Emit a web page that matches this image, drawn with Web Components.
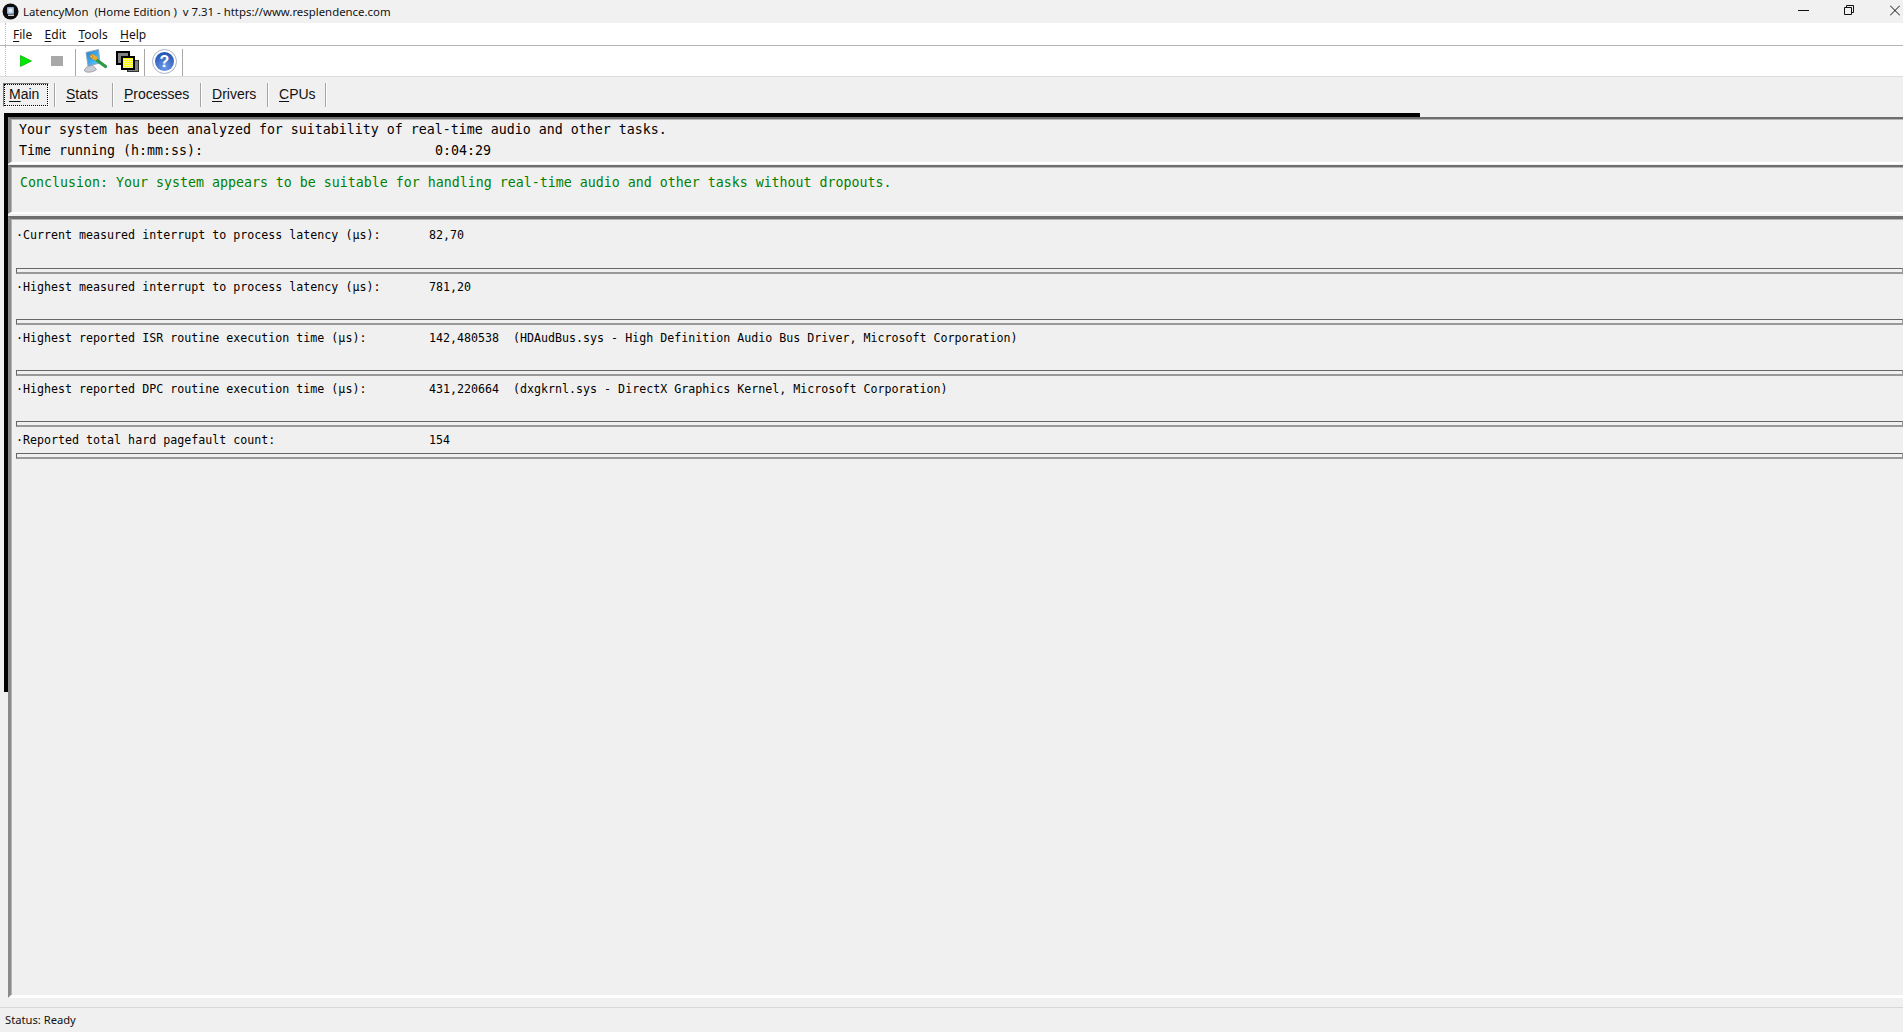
<!DOCTYPE html>
<html>
<head>
<meta charset="utf-8">
<title>LatencyMon</title>
<style>
  html, body { margin: 0; height: 1032px; overflow: hidden; background: #f0f0f0; }
  body { display: flex; flex-direction: column; font-family: "Noto Sans", sans-serif; color: #000; }
</style>
</head>
<body>
<title-bar></title-bar>
<menu-bar></menu-bar>
<tool-bar></tool-bar>
<tab-strip></tab-strip>
<main-view>
  <info-panel style="height:47px">
    <text-line>Your system has been analyzed for suitability of real-time audio and other tasks.</text-line>
    <text-line value="0:04:29">Time running (h:mm:ss):</text-line>
  </info-panel>
  <info-panel style="height:49px;margin-top:1px;--pad:5px;--left:9px;--ink:#008000">
    <text-line>Conclusion: Your system appears to be suitable for handling real-time audio and other tasks without dropouts.</text-line>
  </info-panel>
  <metric-list>
    <metric-row style="--h:46px" label="Current measured interrupt to process latency (µs):" value="82,70"></metric-row>
    <metric-row label="Highest measured interrupt to process latency (µs):" value="781,20"></metric-row>
    <metric-row label="Highest reported ISR routine execution time (µs):" value="142,480538" detail="(HDAudBus.sys - High Definition Audio Bus Driver, Microsoft Corporation)"></metric-row>
    <metric-row label="Highest reported DPC routine execution time (µs):" value="431,220664" detail="(dxgkrnl.sys - DirectX Graphics Kernel, Microsoft Corporation)"></metric-row>
    <metric-row style="--h:26px" label="Reported total hard pagefault count:" value="154"></metric-row>
  </metric-list>
</main-view>
<status-bar>Status: Ready</status-bar>

<script>
function defineSimple(name, html) {
  customElements.define(name, class extends HTMLElement {
    constructor() {
      super();
      this.attachShadow({mode: 'open'}).innerHTML = html;
    }
  });
}

defineSimple('title-bar', `
<style>
  :host { display: flex; align-items: center; height: 23px; flex: none; background: #f1f1f1; font: 11.4px "Noto Sans", sans-serif; color: #111; }
  svg { display: block; flex: none; }
  .logo { margin: 0 4px 0 2px; }
  .text { flex: 1; white-space: pre; }
</style>
<svg class="logo" width="17" height="17" viewBox="0 0 17 17">
  <circle cx="8.5" cy="8.5" r="8" fill="#0c0c0c"/>
  <rect x="5" y="4" width="7" height="7" rx="1" fill="#8fb0d8"/>
  <rect x="6.5" y="5.5" width="4" height="4" fill="#e8eef6"/>
  <rect x="6" y="11.5" width="6" height="1.5" fill="#d0d0d0"/>
</svg>
<span class="text">LatencyMon  (Home Edition )  v 7.31 - https://www.resplendence.com</span>
<svg style="margin-right:35px" width="11" height="23" viewBox="0 0 11 23"><path d="M0 10.5H11" stroke="#111" fill="none"/></svg>
<svg style="margin-right:36px" width="10" height="23" viewBox="0 0 10 23"><path d="M0.5 7.5H7.5V14.5H0.5ZM2.5 7V5.5H9.5V12.5H8" stroke="#111" fill="none"/></svg>
<svg style="margin-right:3px" width="10" height="23" viewBox="0 0 10 23"><path d="M0 5.5L10 15.5M10 5.5L0 15.5" stroke="#111" fill="none"/></svg>`);

const GRIP = `<span style="flex:none;align-self:stretch;width:0;margin-left:5px;border-left:1px dotted #bdbdbd"></span>`;

class MenuBar extends HTMLElement {
  constructor() {
    super();
    const root = this.attachShadow({mode: 'open'});
    const items = [['F', 'ile'], ['E', 'dit'], ['T', 'ools'], ['H', 'elp']];
    root.innerHTML = `
<style>
  :host { display: flex; flex: none; box-sizing: border-box; height: 23px; background: #fff; border-bottom: 1px solid #b4b4b4; font: 12px "Noto Sans", sans-serif; color: #111; align-items: center; }
  .items { display: flex; gap: 12.4px; margin-left: 7px; }
  u { text-decoration-thickness: 1px; text-underline-offset: 2px; }
</style>
${GRIP}<div class="items">${items.map(i => `<span><u>${i[0]}</u>${i[1]}</span>`).join('')}</div>`;
  }
}
customElements.define('menu-bar', MenuBar);

defineSimple('tool-bar', `
<style>
  :host { display: flex; flex: none; box-sizing: border-box; height: 31px; background: #fff; border-bottom: 1px solid #dcdcdc; align-items: center; }
  svg { display: block; flex: none; }
  .sep { width: 1px; align-self: stretch; margin: 3px 0 0; background: #a8a8a8; flex: none; }
</style>
${GRIP}
<svg style="margin-left:14px" width="12" height="12" viewBox="0 0 12 12"><path d="M0.5 0.5L11.5 6L0.5 11.5Z" fill="#00e800" stroke="#00b000" stroke-width="0.7"/></svg>
<svg style="margin-left:19px" width="12" height="10" viewBox="0 0 12 10"><rect width="12" height="10" fill="#a8a8a8"/></svg>
<span class="sep" style="margin-left:12px"></span>
<svg style="margin-left:7px" width="24" height="24" viewBox="0 0 24 24">
  <defs><linearGradient id="scr" x1="0" y1="0" x2="1" y2="1"><stop offset="0" stop-color="#1b7fd8"/><stop offset="1" stop-color="#62d0f6"/></linearGradient></defs>
  <path d="M3 3.5L15.5 0.5L17 14L5 17Z" fill="url(#scr)" stroke="#8fa2b8" stroke-width="0.9"/>
  <path d="M1.5 22C1.5 18.5 5.5 16.5 10 16.5L13.5 20.5C10 23.5 3.5 24 1.5 22Z" fill="#c9ccd4" stroke="#868a94" stroke-width="0.7"/>
  <path d="M13 10.5L22.5 17.5" stroke="#2f9a45" stroke-width="3.4" stroke-linecap="round"/>
  <path d="M8 6.5L14 10" stroke="#f0a828" stroke-width="4"/>
  <path d="M6.5 5.5L9.5 7L8 10Z" fill="#f6dc90" stroke="#7a5a20" stroke-width="0.5"/>
</svg>
<svg style="margin-left:9px" width="23" height="21" viewBox="0 0 23 21" shape-rendering="crispEdges">
  <defs><pattern id="chk" width="2" height="2" patternUnits="userSpaceOnUse"><rect width="2" height="2" fill="#ffff00"/><rect width="1" height="1" fill="#fff8a0"/></pattern></defs>
  <rect x="1" y="1" width="12" height="12" fill="#808080" stroke="#000" stroke-width="2"/>
  <rect x="11" y="9" width="11" height="11" fill="#808080" stroke="#333" stroke-width="1"/>
  <rect x="6" y="6" width="12" height="12" fill="url(#chk)" stroke="#000" stroke-width="2"/>
</svg>
<span class="sep" style="margin-left:5px"></span>
<svg style="margin-left:7px" width="25" height="25" viewBox="0 0 25 25">
  <defs><radialGradient id="ball" cx="0.5" cy="0.8" r="0.8"><stop offset="0" stop-color="#6f9ce8"/><stop offset="1" stop-color="#1d4fb0"/></radialGradient></defs>
  <circle cx="12.5" cy="12.5" r="12" fill="#fff" stroke="#a8b4c8" stroke-width="1"/>
  <circle cx="12.5" cy="12.5" r="9.5" fill="url(#ball)"/>
  <text x="12.5" y="18" text-anchor="middle" font-family="Liberation Sans" font-weight="700" font-size="16" fill="#fff">?</text>
</svg>
<span class="sep" style="margin-left:5px"></span>`);

class TabStrip extends HTMLElement {
  constructor() {
    super();
    const root = this.attachShadow({mode: 'open'});
    // [accelerator, rest, width up to the next separator]
    const tabs = [['S', 'tats', 56], ['P', 'rocesses', 86], ['D', 'rivers', 65], ['C', 'PUs', 56]];
    root.innerHTML = `
<style>
  :host { display: flex; flex: none; box-sizing: border-box; height: 36px; padding: 6px 0 0 3px; background: #f0f0f0; font: 14px "Liberation Sans", sans-serif; color: #111; align-items: flex-start; }
  u { text-decoration-thickness: 1px; text-underline-offset: 2px; }
  .main { box-sizing: border-box; width: 46px; height: 24px; margin-right: 5px; padding: 2px 0 0 5px; border: 1px solid; border-color: #777 #fff #fff #777; outline: 1px dotted #000; outline-offset: -2px; }
  .sep { flex: none; width: 1px; height: 24px; background: #a4a4a4; border-right: 1px solid #fff; }
  .tab { box-sizing: border-box; height: 24px; padding: 3px 0 0 10px; }
</style>
<span class="main"><u>M</u>ain</span><span class="sep"></span>
${tabs.map(t => `<span class="tab" style="width:${t[2]}px"><u>${t[0]}</u>${t[1]}</span><span class="sep"></span>`).join('')}`;
  }
}
customElements.define('tab-strip', TabStrip);

defineSimple('main-view', `
<style>
  :host { display: flex; flex-direction: column; flex: 1; min-height: 0; margin-left: 4px; padding-bottom: 9px; }
  .top { flex: none; width: 1416px; height: 4px; background: #000; }
  .row { flex: 1; display: flex; min-height: 0; }
  .side { flex: none; width: 4px; height: 575px; background: #000; }
  .panels { flex: 1; min-width: 0; display: flex; flex-direction: column; }
</style>
<div class="top"></div>
<div class="row"><div class="side"></div><div class="panels"><slot></slot></div></div>`);

const PANEL_EDGE = `
    box-sizing: border-box; display: block; flex: none;
    border-left: 3px solid #8a8a8a; border-top: 2px solid #6e6e6e; border-bottom: 2px solid #fff;
    box-shadow: inset 0 1px #b4b4b4, inset 1px 0 #b4b4b4;`;

defineSimple('info-panel', `
<style>
  :host { ${PANEL_EDGE} padding: var(--pad, 0) 0 0 var(--left, 8px); color: var(--ink, #000); font: 13.29px/21px "DejaVu Sans Mono", monospace; }
</style>
<slot></slot>`);

class TextLine extends HTMLElement {
  constructor() {
    super();
    this.attachShadow({mode: 'open'}).innerHTML = `
<style>
  :host { display: flex; height: 21px; white-space: pre; }
  .label { width: 416px; flex: none; }
  .label.full { width: auto; }
</style>
<span class="label"><slot></slot></span><span class="value"></span>`;
  }
  connectedCallback() {
    const v = this.getAttribute('value');
    if (v) this.shadowRoot.querySelector('.value').textContent = v;
    else this.shadowRoot.querySelector('.label').classList.add('full');
  }
}
customElements.define('text-line', TextLine);

defineSimple('metric-list', `
<style>
  :host { ${PANEL_EDGE} flex: 1; margin-top: 2px; padding-top: 3px; border-bottom-width: 3px; border-top-width: 3px; color: #000; font: 11.65px/14px "DejaVu Sans Mono", monospace; }
</style>
<slot></slot>`);

class MetricRow extends HTMLElement {
  constructor() {
    super();
    this.attachShadow({mode: 'open'}).innerHTML = `
<style>
  :host { display: block; }
  .line { box-sizing: border-box; height: var(--h, 45px); padding: 6px 0 0 5px; display: flex; white-space: pre; }
  .dot { flex: none; width: 7px; }
  .label { flex: none; width: 406px; }
  .value { flex: none; width: 84px; }
  .rule { box-sizing: border-box; height: 6px; margin-left: 5px; border: 1px solid #666; border-color: #666 #999 #999 #666; border-bottom-width: 2px; }
</style>
<div class="line"><span class="dot">·</span><span class="label"></span><span class="value"></span><span class="detail"></span></div>
<div class="rule"></div>`;
  }
  connectedCallback() {
    for (const k of ['label', 'value', 'detail'])
      this.shadowRoot.querySelector('.' + k).textContent = this.getAttribute(k) || '';
  }
}
customElements.define('metric-row', MetricRow);

defineSimple('status-bar', `
<style>
  :host { display: flex; align-items: center; flex: none; box-sizing: border-box; height: 25px; padding: 0 0 1px 5px; border-top: 1px solid #d8d8d8; background: #f0f0f0; font: 11.2px "Noto Sans", sans-serif; color: #111; }
</style>
<slot></slot>`);
</script>
</body>
</html>
